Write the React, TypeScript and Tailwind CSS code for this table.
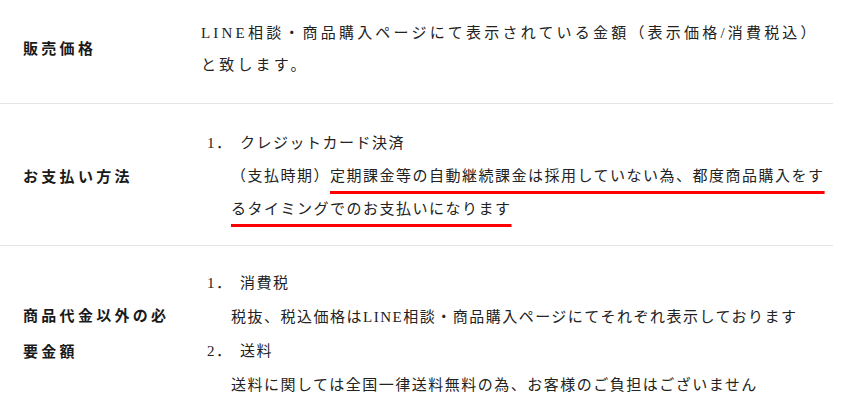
import React from "react";

const font = {
  fontFamily: '"Liberation Serif", "Noto Sans CJK JP", serif',
};

function Row({
  label,
  children,
  className = "",
}: {
  label: React.ReactNode;
  children: React.ReactNode;
  className?: string;
}) {
  return (
    <div className={`flex items-center border-b border-[#e5e5e5] ${className}`}>
      <div className="w-[201px] shrink-0 pl-[23px]">
        <div className="w-[150px] text-[15px] font-bold leading-[36px] tracking-[3.3px] text-[#1a1a1a]">
          {label}
        </div>
      </div>
      <div className="min-w-0 flex-1 text-[15px] text-[#222]">{children}</div>
    </div>
  );
}

function Item({ num, title }: { num: string; title: string }) {
  return (
    <div className="flex pl-[6px]">
      <span className="w-[33px] shrink-0">{num}</span>
      <span>{title}</span>
    </div>
  );
}

export default function App() {
  return (
    <div className="w-[833px] bg-white" style={font}>
      <Row label="販売価格" className="pt-[17px] pb-[22px]">
        <p className="leading-[32px] tracking-[3.2px]">
          LINE相談・商品購入ページにて表示されている金額（表示価格/消費税込）
          <br />
          と致します。
        </p>
      </Row>
      <Row label="お支払い方法" className="pt-[23px] pb-[19px]">
        <div className="leading-[33px] tracking-[1.5px]">
          <Item num="1．" title="クレジットカード決済" />
          <p className="pl-[30px]">
            （支払時期）
            <span className="underline decoration-[#ff0000] decoration-[3px] underline-offset-[10px]">
              定期課金等の自動継続課金は採用していない為、都度商品購入をするタイミングでのお支払いになります
            </span>
          </p>
        </div>
      </Row>
      <Row label="商品代金以外の必要金額" className="pt-[20px] pb-[21px]">
        <div className="leading-[34px] tracking-[1.5px]">
          <Item num="1．" title="消費税" />
          <p className="pl-[30px]">
            税抜、税込価格はLINE相談・商品購入ページにてそれぞれ表示しております
          </p>
          <Item num="2．" title="送料" />
          <p className="pl-[30px]">
            送料に関しては全国一律送料無料の為、お客様のご負担はございません
          </p>
        </div>
      </Row>
    </div>
  );
}
